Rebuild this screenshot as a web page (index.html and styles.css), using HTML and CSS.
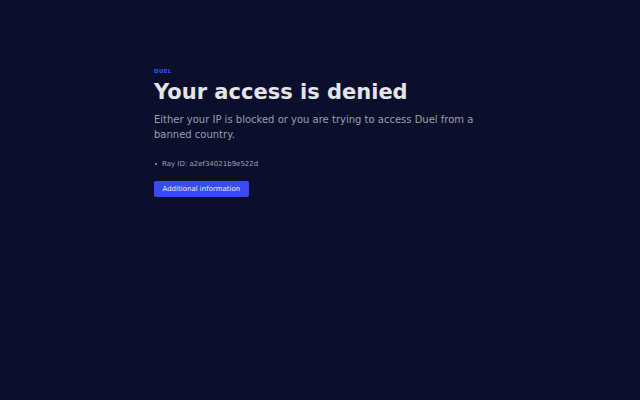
FILE: index.html
```html
<!DOCTYPE html>
<html lang="en">
<head>
<meta charset="utf-8">
<title>Access denied | Duel</title>
<link rel="stylesheet" href="styles.css">
</head>
<body>
<main class="page">
  <section class="content">
    <p class="brand">DUEL</p>
    <h1 class="title">Your access is denied</h1>
    <p class="lead">Either your IP is blocked or you are trying to access Duel from a banned country.</p>
    <ul class="meta">
      <li>Ray ID: a2ef34021b9e522d</li>
    </ul>
    <button class="btn" type="button">Additional information</button>
  </section>
</main>
</body>
</html>
```

FILE: styles.css
```css
html, body {
  margin: 0;
  padding: 0;
  height: 100%;
}
body {
  background: #0b0f2c;
  font-family: "DejaVu Sans", sans-serif;
  color: #e5e7eb;
}
.page {
  padding: 67px 154px 0 154px;
}
.content {
  max-width: 336px;
}
.brand {
  margin: 0;
  font-size: 5.5px;
  font-weight: 700;
  letter-spacing: 0.06em;
  color: #3d4cf5;
  line-height: 8px;
}
.title {
  margin: 3px 0 0 0;
  font-size: 21px;
  line-height: 28px;
  font-weight: 700;
  color: #e4e5ea;
}
.lead {
  margin: 6px 0 0 0;
  font-size: 10px;
  line-height: 15px;
  color: #9b9db0;
}
.meta {
  margin: 17px 0 0 0;
  padding: 0 0 0 8px;
  font-size: 7px;
  line-height: 10px;
  color: #a0a2b3;
  list-style: none;
}
.meta li {
  position: relative;
}
.meta li::before {
  content: "";
  position: absolute;
  left: -7px;
  top: 4px;
  width: 2px;
  height: 2px;
  border-radius: 50%;
  background: #a0a2b3;
}
.btn {
  margin-top: 12px;
  display: block;
  height: 16px;
  padding: 0 8.5px;
  border: 0;
  border-radius: 2px;
  background: #3a4af2;
  color: #e6e8ff;
  font-family: "DejaVu Sans", sans-serif;
  font-size: 7px;
  line-height: 16px;
}
```
